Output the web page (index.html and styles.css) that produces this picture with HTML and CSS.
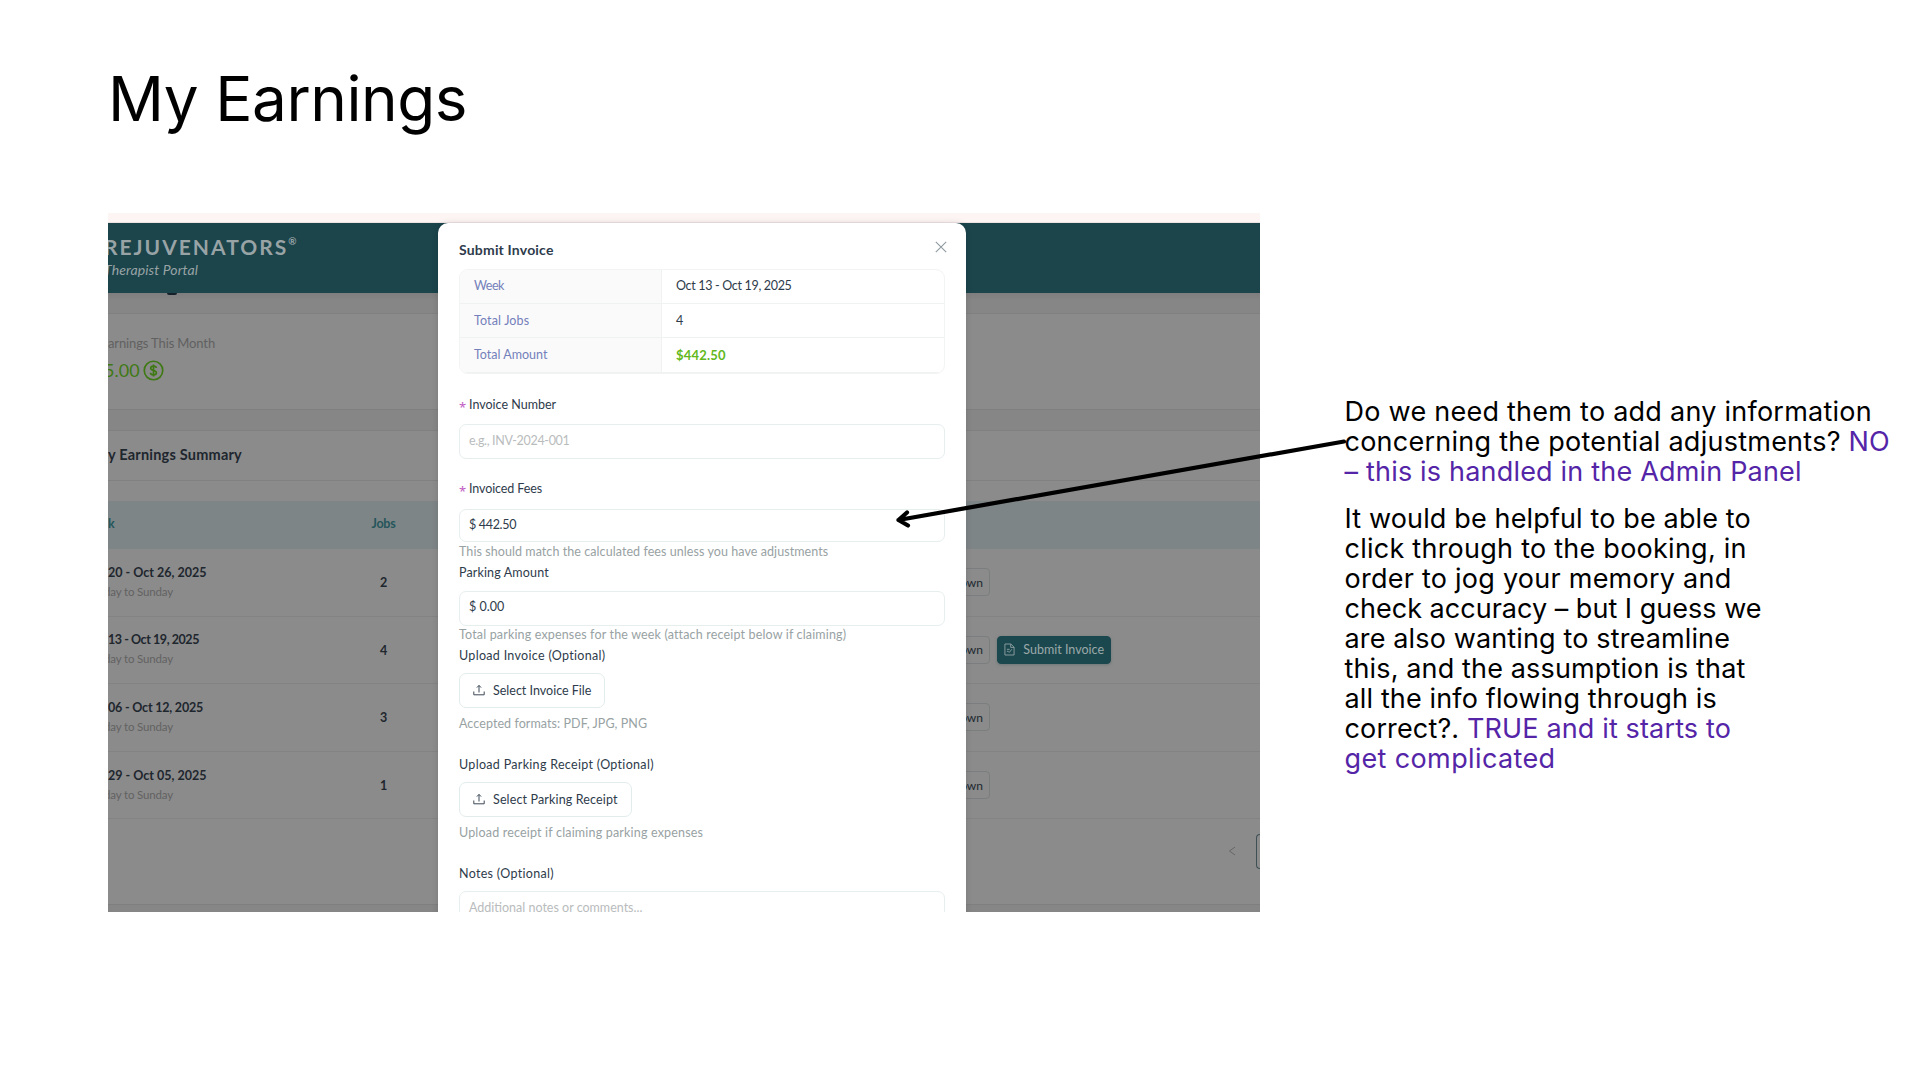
FILE: index.html
```html
<!DOCTYPE html>
<html lang="en">
<head>
<meta charset="utf-8">
<title>My Earnings</title>
<link rel="stylesheet" href="styles.css">
</head>
<body>
<main class="slide">
  <h1 class="slide-title">My Earnings</h1>
  <div class="slide-body">
    <section class="shot">
      <div class="strip"></div>
      <header class="topbar">
        <div class="brand">REJUVENATORS<sup>®</sup></div>
        <div class="tagline">Therapist Portal</div>
      </header>
      <div class="band band-top"><i class="descender"></i></div>
      <div class="card stats">
        <div class="stat-label">arnings This Month</div>
        <div class="stat-value"><span>5.00</span>
          <svg class="coin" viewBox="0 0 20 20"><circle cx="10" cy="10" r="8.8"/><path d="M12.8 7.6C12.6 6.4 11.5 5.8 10 5.8S7.3 6.5 7.3 7.8c0 2.900 5.500 1.400 5.500 4.300 0 1.300-1.200 2-2.800 2s-2.800-.7-2.900-2M10 4.300v11.300"/></svg>
        </div>
      </div>
      <div class="band"></div>
      <div class="card summary">
        <div class="card-head">y Earnings Summary</div>
        <div class="table">
          <div class="tr th"><div class="week">k</div><div class="jobs tight2">Jobs</div></div>
          <div class="tr"><div class="week"><b>20 - Oct 26, 2025</b><small>day to Sunday</small></div><div class="jobs">2</div><div class="actions"><span class="btn">own</span></div></div>
          <div class="tr"><div class="week"><b class="tight4">13 - Oct 19, 2025</b><small>day to Sunday</small></div><div class="jobs">4</div><div class="actions"><span class="btn">own</span><span class="btn primary"><svg viewBox="0 0 12 14"><path d="M1 1h6.500L11 4.500V13H1zM7.300 1v3.700H11M3.200 6.800h3M3.200 9h2M5.500 10.500l3-3.700"/></svg><span>Submit Invoice</span></span></div></div>
          <div class="tr"><div class="week"><b class="tight2">06 - Oct 12, 2025</b><small>day to Sunday</small></div><div class="jobs">3</div><div class="actions"><span class="btn">own</span></div></div>
          <div class="tr"><div class="week"><b>29 - Oct 05, 2025</b><small>day to Sunday</small></div><div class="jobs">1</div><div class="actions"><span class="btn">own</span></div></div>
        </div>
        <div class="pager"><svg viewBox="0 0 8 10"><path d="M7 1 1.500 5 7 9"/></svg><i class="page"></i></div>
      </div>
      <div class="band band-end"></div>

      <div class="modal">
        <div class="modal-title"><span class="wide2">Submit Invoice</span>
          <svg class="close" viewBox="0 0 12 12"><path d="M.8.8l10.400 10.400M11.200.8.8 11.200"/></svg>
        </div>
        <dl class="facts">
          <dt class="first tight4">Week</dt><dd class="first tight3">Oct 13 - Oct 19, 2025</dd>
          <dt class="wide1">Total Jobs</dt><dd>4</dd>
          <dt>Total Amount</dt><dd class="amount wide2">$442.50</dd>
        </dl>
        <label class="l1"><em>*</em>Invoice Number</label>
        <div class="input i1 hint tight3">e.g., INV-2024-001</div>
        <label class="l2 tight1"><em>*</em>Invoiced Fees</label>
        <div class="input i2 tight3">$ 442.50</div>
        <p class="help">This should match the calculated fees unless you have adjustments</p>
        <label class="l3 wide1">Parking Amount</label>
        <div class="input i3">$ 0.00</div>
        <p class="help help-long">Total parking expenses for the week (attach receipt below if claiming)</p>
        <label class="l4 wide3">Upload Invoice (Optional)</label>
        <div class="upload u1"><svg viewBox="0 0 12 12"><path d="M.8 7.500v3.300h10.400V7.500M6 8.500V1.500M3.900 3.600 6 1.400l2.100 2.200"/></svg>Select Invoice File</div>
        <p class="help h1">Accepted formats: PDF, JPG, PNG</p>
        <label class="l5 wide3">Upload Parking Receipt (Optional)</label>
        <div class="upload u2 wide1"><svg viewBox="0 0 12 12"><path d="M.8 7.500v3.300h10.400V7.500M6 8.500V1.500M3.900 3.600 6 1.400l2.100 2.200"/></svg>Select Parking Receipt</div>
        <p class="help h1 wide2">Upload receipt if claiming parking expenses</p>
        <label class="l5 wide3">Notes (Optional)</label>
        <div class="input i4 hint">Additional notes or comments...</div>
      </div>
    </section>
    <aside class="notes">
      <p class="wide2"><span class="wide25">Do we need them to add any information<br>concerning the potential adjustments?</span> <mark>NO<br>– this is handled in the Admin Panel</mark></p>
      <p class="wide1">It would be helpful to be able to<br><span class="wide25">click through to the booking, in<br>order to jog your memory and</span><br><span class="wide0">check accuracy – but I guess we</span><br>are also wanting to streamline<br>this, and the assumption is that<br>all the info flowing through is<br>correct?. <mark>TRUE and it starts to<br><span class="wide4">get complicated</span></mark></p>
    </aside>
  </div>
  <svg class="arrow" viewBox="0 0 1920 1080"><path d="M1344 441.500 898.500 520M907 512.500 898.500 520 908 525.500"/></svg>
</main>
</body>
</html>
```
FILE: styles.css
```css
* { box-sizing: border-box; }
body { margin: 0; background: #fff; color: #000; font-family: Inter, sans-serif; }
.slide { position: relative; width: 1920px; height: 1080px; overflow: hidden; padding-left: 108px; }
.slide-title { margin: 0; height: 213px; padding-top: 61px; font-size: 62px; line-height: 75px; font-weight: 400; letter-spacing: -.45px; white-space: nowrap; }
.slide-body { display: flex; }

.tight1 { letter-spacing: -.1px; }
.tight2 { letter-spacing: -.2px; }
.tight3 { letter-spacing: -.32px; }
.tight4 { letter-spacing: -.44px; }
.wide0 { letter-spacing: .02px; }
.wide1 { letter-spacing: .14px; }
.wide2 { letter-spacing: .19px; }
.wide25 { letter-spacing: .25px; }
.wide3 { letter-spacing: .31px; }
.wide4 { letter-spacing: .38px; }

.shot { position: relative; flex: none; width: 1152px; height: 699px; overflow: hidden; display: flex; flex-direction: column; font-family: Lato, sans-serif; font-size: 12.5px; white-space: nowrap; background: #8b8b8b; }
.strip { height: 10px; background: #fdf5f4; border-bottom: 1px solid #eee3e4; }
.topbar { height: 70px; background: #1b444b; color: #98a3a5; padding-top: 10px; }
.brand { display: flex; height: 27px; line-height: 28px; font-size: 21px; font-weight: 700; letter-spacing: 2px; margin-left: -4px; }
.brand sup { font-size: 10px; line-height: 17px; }
.tagline { height: 20px; line-height: 20px; font-size: 14px; font-style: italic; letter-spacing: .1px; margin-left: -4px; }
.band { height: 22px; background: #868686; border-top: 1px solid #7f7f7f; border-bottom: 1px solid #808080; flex: none; }
.band-top { height: 21px; border-top: 0; background: linear-gradient(#7e7e7e, #868686 8px); }
.descender { display: block; width: 10px; height: 2px; margin-left: 59px; background: #15202a; border-radius: 0 0 5px 5px; }
.card { background: #8b8b8b; flex: none; }
.stats { height: 95px; padding-top: 19px; }
.stat-label { height: 22px; line-height: 21px; font-size: 13px; letter-spacing: -.13px; color: #616161; }
.stat-value { display: flex; align-items: center; height: 30px; margin-left: -4px; gap: 3px; font-size: 18px; color: #3f7914; }
.coin { width: 21px; height: 21px; fill: none; stroke: #3f7914; stroke-width: 1.6; }
.summary { height: 473px; }
.card-head { height: 50px; line-height: 48px; border-bottom: 1px solid #818181; font-size: 14.5px; font-weight: 700; letter-spacing: .21px; color: #1e262e; }
.table { padding-top: 20px; }
.tr { display: flex; align-items: center; height: 67.6px; border-bottom: 1px solid #838383; color: #1e262e; }
.tr.th { height: 48px; background: #7e8586; border: 0; color: #24565b; font-weight: 700; padding-bottom: 3px; }
.week { width: 230px; display: flex; flex-direction: column; padding-bottom: 1px; }
.week b { line-height: 20px; }
.week small { line-height: 18px; font-size: 11.5px; letter-spacing: -.16px; color: #626262; margin-left: -4px; }
.th .week { padding: 0; }
.jobs { width: 91px; text-align: center; font-weight: 700; padding-top: 1px; }
.th .jobs { padding-top: 0; }
.actions { display: flex; gap: 7px; margin-left: 470px; }
.btn { display: flex; align-items: center; justify-content: flex-end; width: 91px; height: 28px; padding: 0 6px 0; border: 1px solid #7b7e7e; border-radius: 4px; font-size: 12px; color: #20282f; }
.btn.primary { width: 114px; gap: 8px; background: #1b484e; border-color: #1b484e; color: #9ba8aa; box-shadow: 0 1px 3px #6f7777; font-size: 12.5px; }
.primary svg { width: 11px; height: 13px; fill: none; stroke: #8fa0a2; }
.pager { display: flex; align-items: center; justify-content: flex-end; gap: 20px; height: 66px; padding-bottom: 2px; }
.pager svg { width: 8px; height: 10px; fill: none; stroke: #666; }
.page { width: 4px; height: 35px; border: 1px solid #3e5055; border-right: 0; border-radius: 5px 0 0 5px; }
.band-end { height: 8px; border-bottom: 0; }

.modal { position: absolute; left: 330px; top: 10px; width: 528px; height: 700px; padding: 17px 21px 0 21px; background: #fff; border-radius: 10px 10px 0 0; color: #2e3b4b; box-shadow: 0 0 6px rgba(0,0,0,.12); }
.modal-title { display: flex; justify-content: space-between; height: 20px; line-height: 20px; font-size: 14px; font-weight: 700; }
.close { width: 12px; height: 12px; margin: 1px -2px 0 0; fill: none; stroke: #8f9aa0; stroke-width: 1.1; }
.facts { display: grid; grid-template-columns: 202px 1fr; grid-template-rows: 34px 34px 35px; margin: 9px 0 0; border: 1px solid #f2f3f3; border-radius: 9px; overflow: hidden; }
.facts dt, .facts dd { margin: 0; padding-left: 14px; line-height: 33px; border-bottom: 1px solid #f0f1f1; }
.facts .first { line-height: 32px; }
.facts dt { background: #fafafa; color: #7480bb; border-right: 1px solid #f0f1f1; }
.facts .amount { color: #62b81c; font-weight: 700; font-size: 13px; line-height: 34px; }
label { display: flex; height: 20px; line-height: 22px; }
label em { width: 10px; font-size: 19px; line-height: 30px; font-style: normal; font-family: "Noto Sans", sans-serif; font-size: 13px; line-height: 26px; color: #c05cc4; }
.l1 { margin-top: 20px; }
.l2 { margin-top: 19.5px; }
.l3 { margin-top: 2px; }
.l4 { margin-top: 1.5px; }
.l5 { margin-top: 22px; }
.input { height: 35px; padding-left: 9px; line-height: 30px; border: 1px solid #e6eeee; border-radius: 7px; }
.hint { color: #b9bcbd; }
.i1 { margin-top: 9.5px; line-height: 32px; }
.i2 { margin-top: 10.5px; height: 33.5px; }
.i3 { margin-top: 8.5px; }
.i4 { margin-top: 8px; height: 70px; line-height: 32px; }
.help { margin: 0; height: 18px; line-height: 19px; letter-spacing: .07px; color: #98a2a3; }
.help-long { letter-spacing: .16px; line-height: 18px; }
.help.wide2 { letter-spacing: .18px; }
.h1 { margin-top: 6px; line-height: 20px; }
.upload { display: flex; align-items: center; width: fit-content; height: 35px; margin-top: 8px; padding: 0 13px 1px; gap: 8px; border: 1px solid #e2ecec; border-radius: 7px; }
.upload svg { width: 12px; height: 12px; fill: none; stroke: #3c4856; }

.notes { margin: 184px 0 0 84.5px; font-size: 27px; line-height: 30px; font-weight: 400; white-space: nowrap; }
.notes p { margin: 0 0 17px; }
.notes mark { background: none; color: #5525a8; }
.arrow { position: absolute; inset: 0; width: 1920px; height: 1080px; fill: none; stroke: #000; stroke-width: 4.2; stroke-linecap: round; stroke-linejoin: round; }
```
